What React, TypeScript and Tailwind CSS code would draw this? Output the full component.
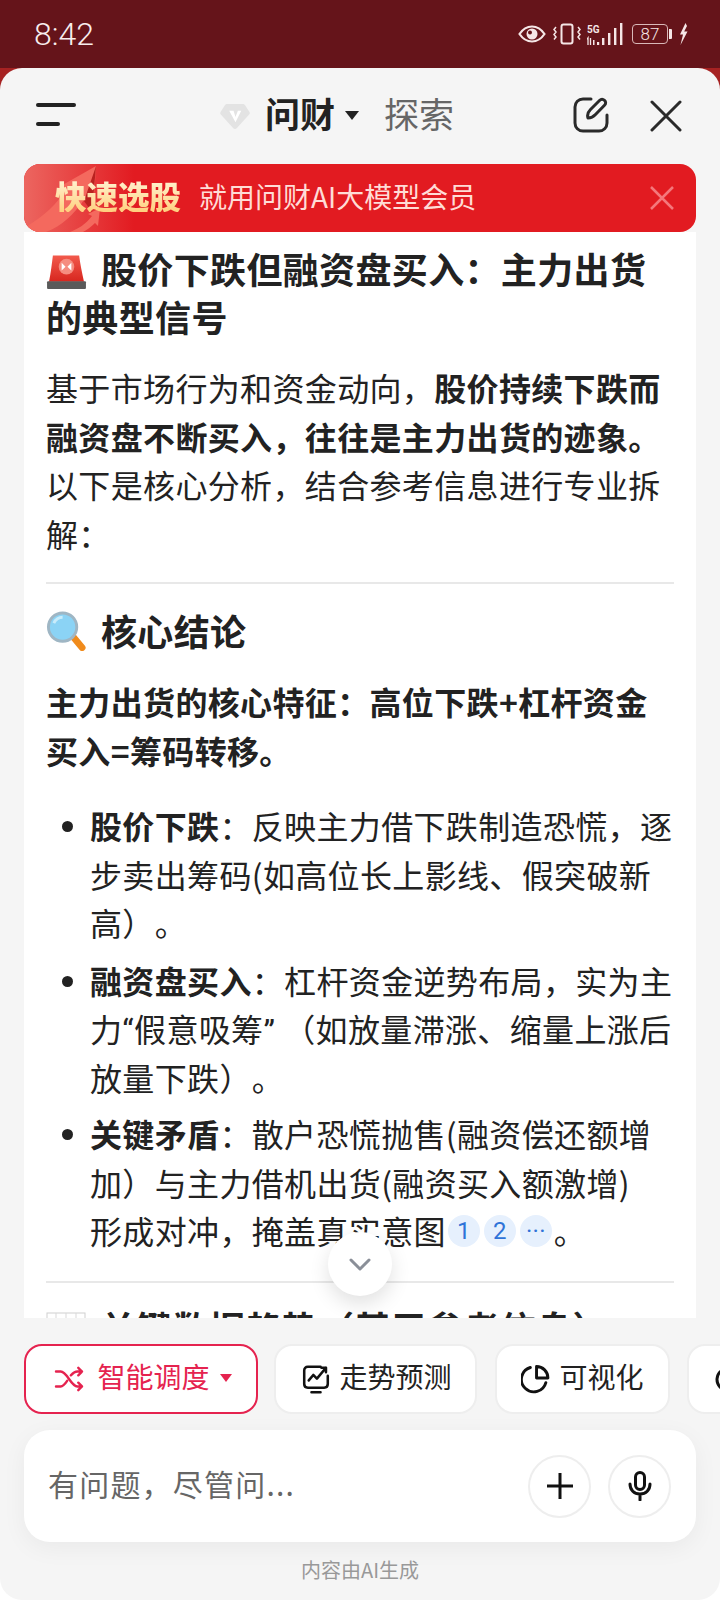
import React from "react";

const CJK = "font-['Noto_Sans_CJK_SC','Noto_Sans',sans-serif]";

function StatusIcons() {
  return (
    <div className="flex items-center">
      <svg width="28" height="18" viewBox="0 0 28 18" fill="none">
        <path d="M1.500 9C5 3.800 9.200 1.500 14 1.500S23 3.800 26.500 9C23 14.200 18.800 16.500 14 16.500S5 14.200 1.500 9Z" stroke="#f5e6e6" strokeWidth="2.200" />
        <circle cx="14" cy="9" r="5.500" fill="#f5e6e6" />
        <circle cx="12" cy="7.500" r="2" fill="#65141a" />
      </svg>
      <svg className="ml-[7px]" width="28" height="22" viewBox="0 0 28 22" fill="none" stroke="#f5e6e6">
        <rect x="8.500" y="1.500" width="11" height="19" rx="2" strokeWidth="2" />
        <path d="M3 4l-2 2.500 2 2.500-2 2.500 2 2.500-2 2.500M25 4l2 2.500-2 2.500 2 2.500-2 2.500 2 2.500" strokeWidth="1.500" />
      </svg>
      <svg className="ml-[6px]" width="36" height="23" viewBox="0 0 36 23" fill="#f5e6e6">
        <text x="0" y="9.500" fontSize="10" fontWeight="700" fontFamily="Roboto, sans-serif">5G</text>
        <path d="M1 22v-7l-1 1.500M3.500 15v7" stroke="#f5e6e6" strokeWidth="1.300" fill="none" />
        <rect x="6" y="17" width="1.500" height="5" />
        <rect x="10" y="19" width="2.200" height="3" />
        <rect x="15" y="15" width="2.400" height="7" />
        <rect x="21" y="10" width="2.400" height="12" />
        <rect x="27" y="5" width="2.400" height="17" />
        <rect x="33" y="0" width="2.400" height="22" />
      </svg>
      <div className="ml-[9px] flex h-[20px] w-[36px] items-center justify-center rounded-[4px] border-[1.500px] border-[#d9b8b8] font-['Roboto',sans-serif] text-[17px] leading-none font-light text-[#f5e6e6]">
        87
      </div>
      <div className="ml-[1px] h-[10px] w-[3px] rounded-r-[1px] bg-[#f5e6e6]" />
      <svg className="ml-[7px]" width="9" height="22" viewBox="0 0 9 22" fill="#f5e6e6">
        <path d="M6.500 0L1 11.500h3L1.500 22 8.500 8.500H5.200L8 3z" />
      </svg>
    </div>
  );
}

function Siren() {
  return (
    <svg width="41" height="35" viewBox="0 0 40 36" className="shrink-0">
      <defs>
        <linearGradient id="sr" x1="0" y1="0" x2="0" y2="1">
          <stop offset="0" stopColor="#f25a4c" />
          <stop offset="1" stopColor="#d7261f" />
        </linearGradient>
      </defs>
      <path d="M6 1.500h27c1 8 3 18 5 27H2C4 19 5 9 6 1.500Z" fill="url(#sr)" />
      <circle cx="20" cy="13" r="8" fill="#f58d80" />
      <path d="M15 9l4 4-4 4zM25 9l-4 4 4 4z" fill="#fff" />
      <rect x="0" y="28" width="40" height="8" rx="1" fill="#5a5a5a" />
    </svg>
  );
}

function Magnifier() {
  return (
    <svg width="41" height="40" viewBox="0 0 42 40" className="shrink-0">
      <path d="M27 25l10 12" stroke="#f08b1c" strokeWidth="7" strokeLinecap="round" />
      <circle cx="17" cy="16" r="14.500" fill="#8bd3f5" stroke="#9fb6c4" strokeWidth="3" />
      <path d="M8 12c2-4 5-6 9-6" stroke="#c8ecfb" strokeWidth="3" fill="none" />
    </svg>
  );
}

function TableIcon() {
  return (
    <svg width="40" height="36" viewBox="0 0 40 36" className="shrink-0">
      <rect x="1" y="1" width="38" height="34" fill="#fff" stroke="#cfcfcf" />
      <path d="M1 8h38M1 15h38M1 22h38M1 29h38M10 1v34M20 1v34M30 1v34" stroke="#d9d9d9" />
    </svg>
  );
}

function Heading({ icon, children, className = "" }: { icon: React.ReactNode; children: React.ReactNode; className?: string }) {
  return (
    <h2 className={`shrink-0 text-[36px] leading-[48px] font-bold text-[#222] ${className}`}>
      <span className="mr-[14px] inline-block align-[-5px]">{icon}</span>
      {children}
    </h2>
  );
}

function Bullet({ children, className = "" }: { children: React.ReactNode; className?: string }) {
  return (
    <li className={`relative pl-[44px] ${className}`}>
      <span className="absolute top-[20px] left-[16px] h-[11px] w-[11px] rounded-full bg-[#222]" />
      {children}
    </li>
  );
}

function Cite({ children }: { children: React.ReactNode }) {
  return (
    <span className="mx-[2px] inline-flex h-[32px] w-[32px] items-center justify-center rounded-full bg-[#e6f0fd] align-[5px] font-['Roboto',sans-serif] text-[24px] leading-none text-[#2f73d8]">
      {children}
    </span>
  );
}

function Chip({ icon, label, className = "" }: { icon: React.ReactNode; label?: string; className?: string }) {
  return (
    <div className={`flex h-[70px] shrink-0 items-center justify-center gap-[9px] rounded-[18px] border-2 border-[#eeeeee] bg-white text-[28px] text-[#222] ${className}`}>
      {icon}
      {label ? <span className="mb-[6px]">{label}</span> : null}
    </div>
  );
}

export default function App() {
  return (
    <div className={`flex h-[1600px] w-[720px] flex-col overflow-hidden bg-[linear-gradient(#a62222_200px,#ffffff_200px)] ${CJK}`}>
      <div className="flex h-[68px] shrink-0 items-center justify-between bg-[#65141a] pr-[32px] pl-[34px]">
        <span className="font-['Roboto',sans-serif] text-[32px] leading-none font-light text-[#f8eded]">8:42</span>
        <StatusIcons />
      </div>

      <div className="relative flex min-h-0 flex-1 flex-col overflow-hidden rounded-[22px] bg-[#f5f5f5]">
        <header className="flex h-[96px] shrink-0 items-center pr-[38px] pb-[4px] pl-[36px]">
          <div className="flex w-[40px] flex-col gap-[15px]">
            <div className="h-[4px] w-[40px] rounded-full bg-[#222]" />
            <div className="h-[4px] w-[24px] rounded-full bg-[#222]" />
          </div>
          <svg className="mt-[4px] ml-[143px]" width="32" height="27" viewBox="0 0 32 28">
            <path d="M8 1h16c1 0 2 .5 2.500 1.300l4.500 7c.5 1 .5 1.700-.3 2.700L18 26c-1.200 1.300-2.800 1.300-4 0L1.300 12C.5 11 .5 10.300 1 9.300l4.500-7C6 1.500 7 1 8 1Z" fill="#e3e3e3" />
            <path d="M10 8h4.500l2 6.500L19 8h3.500l-6 12Z" fill="#fff" />
          </svg>
          <span className="mb-[4px] ml-[14px] text-[35px] leading-none font-bold text-[#222]">问财</span>
          <span className="mt-[2px] ml-[10px] h-0 w-0 border-x-[7px] border-t-[9px] border-x-transparent border-t-[#222]" />
          <span className="mb-[4px] ml-[25px] text-[35px] leading-none text-[#666]">探索</span>
          <svg className="mt-[2px] ml-[119px]" width="36" height="36" viewBox="0 0 36 36" fill="none" stroke="#2a2a2a" strokeWidth="3" strokeLinecap="round" strokeLinejoin="round">
            <path d="M18 2H10C5.500 2 2 5.500 2 10v16c0 4.500 3.500 8 8 8h16c4.500 0 8-3.500 8-8v-8" />
            <path d="M15 21c-1-3 0-6 2.500-8.500l9-9c1.500-1.500 3.500-1.500 5-.2s1.500 3.500 0 5l-9 9.200c-2.300 2.500-4.500 3.500-7.500 3.500Z" />
          </svg>
          <svg className="mt-[4px] ml-auto" width="32" height="32" viewBox="0 0 32 32" fill="none" stroke="#2a2a2a" strokeWidth="3" strokeLinecap="round">
            <path d="M2 2l28 28M30 2L2 30" />
          </svg>
        </header>

        <div className="relative z-10 mx-[24px] flex h-[68px] shrink-0 items-center overflow-hidden rounded-[16px] bg-[#e21b21] pb-[4px]">
          <svg className="absolute top-0 left-0" width="110" height="68" viewBox="0 0 110 68">
            <defs>
              <linearGradient id="bn" x1="0" y1="0" x2="1" y2="0">
                <stop offset="0" stopColor="#ec6660" />
                <stop offset="1" stopColor="#e21b21" />
              </linearGradient>
            </defs>
            <rect width="110" height="68" fill="url(#bn)" />
            <path d="M0 64C20 52 34 40 42 24l-7-1L72 2l-3 44-9-10C50 50 38 62 22 68H0Z" fill="#f4695e" />
            <path d="M72 2L68 48 60 37 70 8Z" fill="#b9221f" />
            <path d="M46 68c8-3 16-8 22-16l-4-2 12-6-2 18-3-3c-4 4-8 7-12 9Z" fill="#f4695e" />
          </svg>
          <span className="relative ml-[31px] bg-gradient-to-b from-[#fff3d0] to-[#ffcf7d] bg-clip-text text-[31.500px] leading-none font-black text-transparent">
            快速选股
          </span>
          <span className="relative ml-[18px] text-[28px] leading-none text-[#ffdcd6]">就用问财AI大模型会员</span>
          <svg className="absolute top-[22px] right-[22px]" width="24" height="24" viewBox="0 0 24 24" fill="none" stroke="#f4777b" strokeWidth="2.500">
            <path d="M1 1l22 22M23 1L1 23" />
          </svg>
        </div>

        <div className="relative mx-[24px] flex min-h-0 flex-1 flex-col overflow-hidden bg-white px-[22px] pt-[12px] text-[32px] leading-[48.500px] tracking-[0.35px] text-[#222] [text-spacing-trim:space-all]">
          <Heading icon={<Siren />}>股价下跌但融资盘买入：主力出货的典型信号</Heading>
          <p className="mt-[23px] shrink-0">
            基于市场行为和资金动向，<b className="font-bold">股价持续下跌而融资盘不断买入，往往是主力出货的迹象。</b>以下是核心分析，结合参考信息进行专业拆解：
          </p>
          <hr className="mt-[25px] shrink-0 border-t-2 border-[#e8e8e8]" />
          <Heading icon={<Magnifier />} className="mt-[22px]">核心结论</Heading>
          <p className="mt-[23px] shrink-0 font-bold">主力出货的核心特征：高位下跌+杠杆资金买入=筹码转移。</p>
          <ul className="mt-[27px] shrink-0">
            <Bullet>
              <b>股价下跌</b>：反映主力借下跌制造恐慌，逐步卖出筹码(如高位长上影线、假突破新高）。
            </Bullet>
            <Bullet className="mt-[9px]">
              <b>融资盘买入</b>：杠杆资金逆势布局，实为主力<span className="font-['Roboto',sans-serif] leading-none">“</span>假意吸筹<span className="pr-[8px] font-['Roboto',sans-serif] leading-none">”</span>（如放量滞涨、缩量上涨后放量下跌）。
            </Bullet>
            <Bullet className="mt-[8px]">
              <b>关键矛盾</b>：散户恐慌抛售(融资偿还额增加）与主力借机出货(融资买入额激增)
              <br />
              形成对冲，掩盖真实意图<Cite>1</Cite>
              <Cite>2</Cite>
              <Cite>···</Cite>。
            </Bullet>
          </ul>
          <hr className="mt-[26px] shrink-0 border-t-2 border-[#e8e8e8]" />
          <Heading icon={<TableIcon />} className="mt-[20px]">关键数据趋势（基于参考信息）</Heading>
        </div>

        <div className="absolute top-[1164px] left-[328px] z-20 flex h-[64px] w-[64px] items-center justify-center rounded-full bg-white shadow-[0_8px_20px_rgba(0,0,0,0.12)]">
          <svg width="22" height="13" viewBox="0 0 22 13" fill="none" stroke="#8a8f98" strokeWidth="3" strokeLinecap="round" strokeLinejoin="round">
            <path d="M2 2l9 9 9-9" />
          </svg>
        </div>

        <div className="flex shrink-0 overflow-hidden pt-[26px] pl-[24px]">
          <div className="flex h-[70px] w-[234px] shrink-0 items-center justify-center rounded-[18px] border-2 border-[#e5234f] bg-white pl-[4px] text-[28px] text-[#e5234f]">
            <svg width="30" height="26" viewBox="0 0 32 28" fill="none" stroke="#e5234f" strokeWidth="2.600" strokeLinecap="round" strokeLinejoin="round">
              <path d="M2 6h5c7 0 11 16 18 16h5M2 22h5c3 0 5-3 7-6M18 10c2-2 4-4 7-4h5M26 2l4 4-4 4M26 18l4 4-4 4" />
            </svg>
            <span className="mb-[6px] ml-[13px]">智能调度</span>
            <span className="mt-[-2px] ml-[10px] h-0 w-0 border-x-[6px] border-t-[8px] border-x-transparent border-t-[#e5234f]" />
          </div>
          <Chip
            className="ml-[16px] w-[203px] pl-[3px]"
            label="走势预测"
            icon={
              <svg width="28" height="29" viewBox="0 0 30 32" fill="none" stroke="#111" strokeWidth="2.800" strokeLinecap="round" strokeLinejoin="round">
                <path d="M20 2H6C3.500 2 2 3.500 2 6v15c0 2.500 1.500 4 4 4h18c2.500 0 4-1.500 4-4V12" />
                <path d="M7 17l5-6 4 4 10-12M21 3h5v5M10 30h10" />
              </svg>
            }
          />
          <Chip
            className="ml-[18px] w-[175px]"
            label="可视化"
            icon={
              <svg width="29" height="29" viewBox="0 0 28 28" fill="none" stroke="#111" strokeWidth="2.800" strokeLinecap="round" strokeLinejoin="round">
                <path d="M9 2.400A12 12 0 1 0 24 17" />
                <path d="M15 1.500A11 11 0 0 1 26 12.500H15Z" />
              </svg>
            }
          />
          <Chip
            className="ml-[17px] w-[120px] !justify-start pl-[24px]"
            icon={
              <svg width="28" height="28" viewBox="0 0 28 28" fill="none" stroke="#111" strokeWidth="3" strokeLinecap="round">
                <path d="M8 6A11 11 0 1 0 22 6C20 9 18 10 15 8" />
              </svg>
            }
          />
        </div>

        <div className="mx-[24px] mt-[16px] flex h-[112px] shrink-0 items-center rounded-[26px] bg-white pr-[25px] pl-[24px] shadow-[0_6px_24px_rgba(0,0,0,0.05)]">
          <span className="mb-[6px] text-[30px] tracking-[1.200px] text-[#666]">有问题，尽管问...</span>
          <div className="ml-auto flex h-[63px] w-[63px] items-center justify-center rounded-full border-2 border-[#eeeeee]">
            <svg width="26" height="26" viewBox="0 0 26 26" stroke="#111" strokeWidth="3">
              <path d="M13 0v26M0 13h26" />
            </svg>
          </div>
          <div className="ml-[17px] flex h-[63px] w-[63px] items-center justify-center rounded-full border-2 border-[#eeeeee]">
            <svg width="24" height="30" viewBox="0 0 24 30" fill="none" stroke="#111" strokeWidth="3" strokeLinecap="round">
              <rect x="7.500" y="1.500" width="9" height="17" rx="4.500" />
              <path d="M2 13c0 6 4 10 10 10s10-4 10-10M12 23v6" />
            </svg>
          </div>
        </div>

        <div className="pt-[15px] text-center text-[20px] leading-[26px] text-[#999]">内容由AI生成</div>
        <div className="h-[17px]" />
      </div>
    </div>
  );
}
